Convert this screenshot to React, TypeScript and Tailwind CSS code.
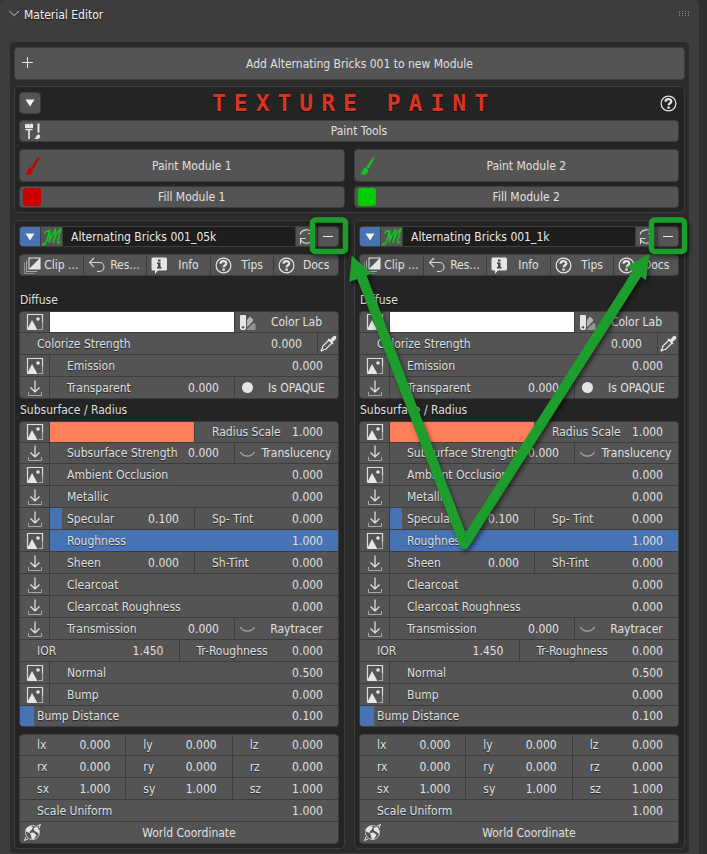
import React from "react";

const BEVEL = "border border-[#3d3d3d] bg-[#545454]";
const FONT = "font-['DejaVu_Sans_Condensed','DejaVu_Sans',sans-serif]";

/* ---------- icons ---------- */

function ImageIcon() {
  return (
    <svg width="18" height="18" viewBox="0 0 18 18" fill="none" className="shrink-0">
      <path d="M1.500 16V1.500H16.500V10" stroke="#dedede" strokeWidth="1.200" />
      <path d="M16.500 9V16.500H12.500" stroke="#a8a8a8" strokeWidth="1.200" />
      <path d="M1 17L6 7L11.500 17Z" fill="#e6e6e6" />
      <circle cx="12" cy="6" r="1.800" fill="#e6e6e6" />
    </svg>
  );
}

function ImportIcon() {
  return (
    <svg width="18" height="18" viewBox="0 0 18 18" fill="none" className="shrink-0">
      <path d="M9 1.500V13M4.500 8.500L9 13L13.500 8.500" stroke="#e6e6e6" strokeWidth="1.200" />
      <path d="M2.500 13V16.500H15.500V13" stroke="#a8a8a8" strokeWidth="1" />
    </svg>
  );
}

function ClipIcon() {
  return (
    <svg width="17" height="17" viewBox="0 0 17 17" fill="none">
      <path d="M0.500 5.500V16.500H11" stroke="#8f8f8f" />
      <path d="M2.500 3.500V14.500H13" stroke="#a8a8a8" />
      <rect x="5" y="1" width="11" height="11" stroke="#e6e6e6" />
      <path d="M16 1V12H5Z" fill="#e6e6e6" />
    </svg>
  );
}

function UndoIcon() {
  return (
    <svg width="17" height="17" viewBox="0 0 17 17" fill="none" stroke="#d8d8d8" strokeWidth="1.100">
      <path d="M6 1L1.500 5.500L6 10M1.500 5.500H11.500A4.500 4.500 0 0 1 11.500 14.500H9" />
    </svg>
  );
}

function InfoIcon() {
  return (
    <svg width="17" height="17" viewBox="0 0 17 17">
      <path d="M2 0.500H14.500Q16 0.500 16 2V12Q16 13.500 14.500 13.500H7L4 17V13.500H2Q0.500 13.500 0.500 12V2Q0.500 0.500 2 0.500Z" fill="#e6e6e6" />
      <path d="M7 2.500H9.500V4.500H7ZM6 5.500H9.500V10H10.500V11.500H6V10H7V7H6Z" fill="#454545" />
    </svg>
  );
}

function HelpIcon() {
  return (
    <svg width="17" height="17" viewBox="0 0 17 17" fill="none" className="shrink-0">
      <circle cx="8.500" cy="8.500" r="7.400" stroke="#e6e6e6" strokeWidth="1.200" />
      <path d="M5.500 6.800C5.500 3.300 11.300 3.300 11.300 6.500C11.300 8.300 8.600 8.200 8.600 10.300" stroke="#e6e6e6" strokeWidth="2.200" />
      <rect x="7.400" y="11.500" width="2.400" height="2.200" fill="#e6e6e6" />
    </svg>
  );
}

function SwatchIcon() {
  return (
    <svg width="17" height="17" viewBox="0 0 17 17">
      <path d="M2 1H6Q7 1 7 2V14Q7 16 4 16Q1 16 1 14V2Q1 1 2 1ZM4 12A1.300 1.300 0 1 0 4.010 12Z" fill="#e6e6e6" fillRule="evenodd" />
      <path d="M8 6L11 2.500L14 5.500V7L8 13.500Z" fill="#b5b5b5" />
      <path d="M14.500 9L16.500 10V16H8V15Z" fill="#949494" />
    </svg>
  );
}

function EyedropperIcon() {
  return (
    <svg width="17" height="17" viewBox="0 0 17 17" fill="none" className="shrink-0">
      <path d="M9 5L2.500 11.500V13L1 15.500L1.500 16L4 14.500H5.500L12 8" stroke="#e6e6e6" strokeWidth="1.200" />
      <path d="M7.500 4.500L9 3.500L10.500 4.500L13 1.500Q15 0 16 1.500Q17 3 15.500 4.500L12.500 7L13.500 8.500L12.500 9.500Z" fill="#e6e6e6" />
    </svg>
  );
}

function DotIcon() {
  return (
    <svg width="17" height="17" viewBox="0 0 17 17">
      <circle cx="8.500" cy="8.500" r="5.500" fill="#e6e6e6" />
    </svg>
  );
}

function ClosedEyeIcon() {
  return (
    <svg width="17" height="17" viewBox="0 0 17 17" fill="none">
      <path d="M1.500 7C4 12.500 12.500 12.500 15.500 7" stroke="#a8a8a8" strokeWidth="1.200" />
    </svg>
  );
}

function WorldIcon() {
  return (
    <svg width="17" height="17" viewBox="0 0 17 17" fill="none">
      <circle cx="8.500" cy="8.500" r="7" stroke="#c8c8c8" />
      <path d="M13 2L16.500 0.500L15 4M2 13L0.500 16.500L4 15" stroke="#e6e6e6" />
      <path d="M3 3.500L6.500 2L9 3L7.500 6L6 7L5.500 9L3 8L1.500 6ZM9.500 4L13 3L15 6.500V10L12.500 8L10 6.500ZM6 9L9.500 8.500L12.500 11L10 15L8 15.500L7 12Z" fill="#e6e6e6" />
    </svg>
  );
}

function PaintToolsIcon() {
  return (
    <svg width="17" height="17" viewBox="0 0 17 17" fill="none">
      <path d="M1 0.500L2.500 1.500L4 0.500L5.500 1.500L7 0.500L9 1V5H1Z" fill="#e6e6e6" />
      <path d="M1.500 6.500H8.500M5 6.500V16" stroke="#e6e6e6" strokeWidth="1.700" />
      <path d="M13.500 0.500H15.500V9L14.800 10H14.200L13.500 9Z" fill="#e6e6e6" />
      <path d="M10 16C12 15.500 12 12 14.500 11.500C17 11.500 17 16 13.500 16Z" fill="#e6e6e6" />
    </svg>
  );
}

function BrushIcon({ color }: { color: string }) {
  return (
    <svg width="18" height="20" viewBox="0 0 18 20" fill={color}>
      <path d="M14.500 1Q16 0.500 15.500 2L9.800 12.800L7 11Z" />
      <path d="M6.300 11.500L9.300 13.500Q8.500 18 6 18.500H1Q3 17 3.500 14.500Q4.500 12 6.300 11.500Z" />
    </svg>
  );
}

function MaterialMark() {
  return (
    <svg width="20" height="18" viewBox="0 0 20 18" fill="none" stroke="#12c51e" strokeWidth="1.500" strokeLinecap="round" className="shrink-0">
      <path d="M1 15.500Q0.500 17.500 2.500 16.500Q5.500 13 7.500 2.500Q4 3 2.500 5M7.500 2.500Q8.500 8 7 14.500Q9.500 7 13.500 1.500Q14 6 11.500 12L11 15Q13.500 6 18.500 0.800Q17 9 15.500 13.500Q15.500 16.500 18 13.500" />
    </svg>
  );
}

function RefreshIcon() {
  return (
    <svg width="17" height="17" viewBox="0 0 17 17" fill="none" stroke="#d8d8d8" strokeWidth="1.100" className="shrink-0">
      <path d="M2 6.500A6.800 6.800 0 0 1 14.500 5.500M14.500 1V5.500H10M15 10.500A6.800 6.800 0 0 1 2.500 11.500M2.500 16V10.500H7.500" />
    </svg>
  );
}

function Triangle() {
  return (
    <svg width="10" height="8" viewBox="0 0 10 8">
      <path d="M0.500 0.500H9.500L5 7.500Z" fill="#f2f2f2" />
    </svg>
  );
}

/* ---------- building blocks ---------- */

/* A button whose label is centred in the room right of its leading icon. */
function IconButton({ icon, label, className = "" }: { icon: React.ReactNode; label: string; className?: string }) {
  return (
    <button type="button" className={`relative flex items-center justify-center pl-5 whitespace-nowrap ${className}`}>
      <span className="absolute inset-y-0 left-1 flex items-center">{icon}</span>
      {label}
    </button>
  );
}

function Group({ children, className = "" }: { children: React.ReactNode; className?: string }) {
  return (
    <div className={`overflow-hidden rounded-[4px] border border-[#3d3d3d] bg-[#545454] ${className}`}>
      {children}
    </div>
  );
}

/* Every row but the first of a group carries its dividing line on top. */
function Row({ children, short = false }: { children: React.ReactNode; short?: boolean }) {
  return (
    <div
      className={`flex divide-x divide-[#3d3d3d] border-t border-[#3d3d3d] first:h-5 first:border-t-0 ${short ? "h-[21px]" : "h-[22px]"}`}
    >
      {children}
    </div>
  );
}

function Source({ kind }: { kind: "image" | "import" }) {
  return (
    <button type="button" aria-label={kind} className="flex w-[30px] shrink-0 items-center justify-center">
      {kind === "image" ? <ImageIcon /> : <ImportIcon />}
    </button>
  );
}

function Num({ label, value, className = "min-w-0 flex-1", fill = "" }: { label: string; value: string; className?: string; fill?: string }) {
  return (
    <label className={`relative flex items-center justify-between pr-[15px] pl-[17px] ${className}`}>
      {fill && <span className={`absolute inset-y-0 left-0 bg-[#4772b3] ${fill}`} />}
      <span className="relative whitespace-nowrap">{label}</span>
      <input className="relative w-8 shrink-0 bg-transparent text-right outline-none" defaultValue={value} />
    </label>
  );
}

function Swatch({ label, color }: { label: string; color: string }) {
  return (
    <input
      type="color"
      aria-label={label}
      defaultValue={color}
      className="h-full min-w-0 flex-1 appearance-none bg-transparent [&::-webkit-color-swatch]:rounded-none [&::-webkit-color-swatch]:border-0 [&::-webkit-color-swatch-wrapper]:p-0"
    />
  );
}

const SIDE = "w-[103px] shrink-0";
const HALF = "w-[143px] shrink-0";

function MaterialPanel({ name }: { name: string }) {
  return (
    <section className="min-w-0 flex-1 rounded-[5px] border border-[#3d3d3d] bg-[#242424] pt-[5px] pr-[5px] pb-1 pl-1">
      <div className="flex h-[21px] divide-x divide-[#3d3d3d] overflow-hidden rounded-[4px] border border-[#3d3d3d] bg-[#545454]">
        <button type="button" aria-label="Collapse" className="flex w-[21px] items-center justify-center bg-[#4772b3]">
          <Triangle />
        </button>
        <button type="button" aria-label="Material" className="flex w-[22px] items-center justify-center">
          <MaterialMark />
        </button>
        <input aria-label="Material name" defaultValue={name} className="min-w-0 flex-1 bg-[#1d1d1d] pl-2 text-[#e8e8e8] outline-none" />
        <button type="button" aria-label="Refresh" className="flex w-[22px] items-center justify-center">
          <RefreshIcon />
        </button>
        <button type="button" aria-label="Remove" className="flex w-5 items-center justify-center">
          <span className="h-px w-[10px] bg-[#e6e6e6]" />
        </button>
      </div>

      <div className="mt-[7px] grid h-[22px] grid-cols-5 divide-x divide-[#3d3d3d] overflow-hidden rounded-[4px] border border-[#3d3d3d] bg-[#545454]">
        <IconButton icon={<ClipIcon />} label="Clip ..." />
        <IconButton icon={<UndoIcon />} label="Res..." />
        <IconButton icon={<InfoIcon />} label="Info" />
        <IconButton icon={<HelpIcon />} label="Tips" />
        <IconButton icon={<HelpIcon />} label="Docs" />
      </div>

      <h3 className="mt-[13px] pl-px leading-[22px]">Diffuse</h3>
      <Group>
        <Row>
          <Source kind="image" />
          <Swatch label="Diffuse colour" color="#ffffff" />
          <IconButton icon={<SwatchIcon />} label="Color Lab" className={SIDE} />
        </Row>
        <Row>
          <Num label="Colorize Strength" value="0.000" />
          <button type="button" aria-label="Pick colour" className="flex w-5 shrink-0 items-center justify-center">
            <EyedropperIcon />
          </button>
        </Row>
        <Row>
          <Source kind="image" />
          <Num label="Emission" value="0.000" />
        </Row>
        <Row>
          <Source kind="import" />
          <Num label="Transparent" value="0.000" />
          <IconButton icon={<DotIcon />} label="Is OPAQUE" className={SIDE} />
        </Row>
      </Group>

      <h3 className="pl-px leading-[22px]">Subsurface / Radius</h3>
      <Group>
        <Row>
          <Source kind="image" />
          <Swatch label="Subsurface colour" color="#ff7f5a" />
          <Num label="Radius Scale" value="1.000" className={HALF} />
        </Row>
        <Row short>
          <Source kind="import" />
          <Num label="Subsurface Strength" value="0.000" />
          <IconButton icon={<ClosedEyeIcon />} label="Translucency" className={SIDE} />
        </Row>
        <Row>
          <Source kind="image" />
          <Num label="Ambient Occlusion" value="0.000" />
        </Row>
        <Row>
          <Source kind="import" />
          <Num label="Metallic" value="0.000" />
        </Row>
        <Row>
          <Source kind="import" />
          <Num label="Specular" value="0.100" fill="w-3" />
          <Num label="Sp- Tint" value="0.000" className={HALF} />
        </Row>
        <Row>
          <Source kind="image" />
          <Num label="Roughness" value="1.000" fill="w-full" />
        </Row>
        <Row>
          <Source kind="import" />
          <Num label="Sheen" value="0.000" />
          <Num label="Sh-Tint" value="0.000" className={HALF} />
        </Row>
        <Row>
          <Source kind="import" />
          <Num label="Clearcoat" value="0.000" />
        </Row>
        <Row>
          <Source kind="import" />
          <Num label="Clearcoat Roughness" value="0.000" />
        </Row>
        <Row>
          <Source kind="import" />
          <Num label="Transmission" value="0.000" />
          <IconButton icon={<ClosedEyeIcon />} label="Raytracer" className={SIDE} />
        </Row>
        <Row>
          <Num label="IOR" value="1.450" />
          <Num label="Tr-Roughness" value="0.000" />
        </Row>
        <Row>
          <Source kind="image" />
          <Num label="Normal" value="0.500" />
        </Row>
        <Row>
          <Source kind="image" />
          <Num label="Bump" value="0.000" />
        </Row>
        <Row short>
          <Num label="Bump Distance" value="0.100" fill="w-[14px]" />
        </Row>
      </Group>

      <Group className="mt-[7px]">
        <Row>
          <Num label="lx" value="0.000" />
          <Num label="ly" value="0.000" />
          <Num label="lz" value="0.000" />
        </Row>
        <Row>
          <Num label="rx" value="0.000" />
          <Num label="ry" value="0.000" />
          <Num label="rz" value="0.000" />
        </Row>
        <Row>
          <Num label="sx" value="1.000" />
          <Num label="sy" value="1.000" />
          <Num label="sz" value="1.000" />
        </Row>
        <Row>
          <Num label="Scale Uniform" value="1.000" />
        </Row>
        <Row>
          <IconButton icon={<WorldIcon />} label="World Coordinate" className="flex-1" />
        </Row>
      </Group>
    </section>
  );
}

function PaintModule({ index, color, swatch }: { index: number; color: string; swatch: string }) {
  return (
    <div className="flex min-w-0 flex-1 flex-col gap-1">
      <IconButton icon={<BrushIcon color={color} />} label={`Paint Module ${index}`} className={`h-[33px] rounded-[4px] ${BEVEL}`} />
      <IconButton
        icon={<span className={`-ml-px size-[18px] rounded-[3px] ${swatch}`} />}
        label={`Fill Module ${index}`}
        className={`h-[22px] rounded-[4px] ${BEVEL}`}
      />
    </div>
  );
}

/* Arrows and frames that point out the two remove buttons. */
function Callouts() {
  return (
    <svg width="707" height="854" viewBox="0 0 707 854" fill="none" className="pointer-events-none absolute top-0 left-0 drop-shadow-[2px_3px_2px_rgba(0,0,0,0.5)]">
      <g stroke="#1d9e2c">
        <rect x="312.500" y="220" width="33" height="31.500" rx="3" strokeWidth="5.500" />
        <rect x="651.500" y="220" width="33" height="31.500" rx="3" strokeWidth="5.500" />
        <path d="M361 275L464.500 544L638 272" strokeWidth="10" strokeLinejoin="round" />
      </g>
      <path d="M351.700 255.500L371.700 273.500L349.300 282Z" fill="#1d9e2c" />
      <path d="M649.300 253.700L646 280.300L627 266.700Z" fill="#1d9e2c" />
    </svg>
  );
}

export default function App() {
  return (
    <div className={`relative min-h-screen bg-[#303030] pr-2 text-[12px] leading-4 text-[#e0e0e0] text-shadow-[0_1px_1px_rgba(0,0,0,0.6)] ${FONT}`}>
      <div className="min-h-screen rounded-t-[4px] bg-[#3d3d3d] pr-[10px] pl-[10px]">
        <header className="flex h-[42px] items-start pt-[7px]">
          <svg width="11" height="14" viewBox="0 0 11 14" fill="none" className="-ml-px shrink-0">
            <path d="M0.500 4L5.200 8.500L10 4" stroke="#c0c0c0" />
          </svg>
          <h1 className="flex-1 pl-1 text-[#f2f2f2]">Material Editor</h1>
          <svg width="10" height="14" viewBox="0 0 10 14" fill="#909090" className="shrink-0">
            {[0, 3, 6, 9].map((x) =>
              [4, 6, 8].map((y) => <rect key={`${x}-${y}`} x={x} y={y} width="1" height="1" />)
            )}
          </svg>
        </header>

        <main className="rounded-[4px] bg-[#2b2b2b] px-1 pt-[5px] pb-1">
          <IconButton
            icon={
              <svg width="18" height="18" viewBox="0 0 18 18" fill="none" className="mb-1">
                <path d="M8.500 4V15M3 9.500H14" stroke="#e6e6e6" />
              </svg>
            }
            label="Add Alternating Bricks 001 to new Module"
            className={`h-[33px] w-full rounded-[4px] ${BEVEL}`}
          />

          <section className="mt-[6px] rounded-[5px] border border-[#3d3d3d] bg-[#242424] pt-[5px] pr-[5px] pb-1 pl-1">
            <div className="flex h-[22px] items-center justify-between">
              <button type="button" aria-label="Collapse texture paint" className={`flex size-[22px] items-center justify-center rounded-[4px] ${BEVEL}`}>
                <Triangle />
              </button>
              <h2 className="pl-2 font-['DejaVu_Sans_Mono',monospace] text-[23px] leading-[22px] font-bold tracking-[8px] text-[#d93322]">TEXTURE PAINT</h2>
              <button type="button" aria-label="Help" className="flex w-5 items-center justify-center">
                <HelpIcon />
              </button>
            </div>
            <IconButton icon={<PaintToolsIcon />} label="Paint Tools" className={`mt-[6px] h-[22px] w-full rounded-[4px] ${BEVEL}`} />
            <div className="mt-[7px] flex gap-[9px]">
              <PaintModule index={1} color="#c80000" swatch="bg-[#cc0000]" />
              <PaintModule index={2} color="#12c51e" swatch="bg-[#00cc00]" />
            </div>
          </section>

          <div className="mt-[7px] flex gap-[9px]">
            <MaterialPanel name="Alternating Bricks 001_05k" />
            <MaterialPanel name="Alternating Bricks 001_1k" />
          </div>
        </main>
      </div>
      <Callouts />
    </div>
  );
}
